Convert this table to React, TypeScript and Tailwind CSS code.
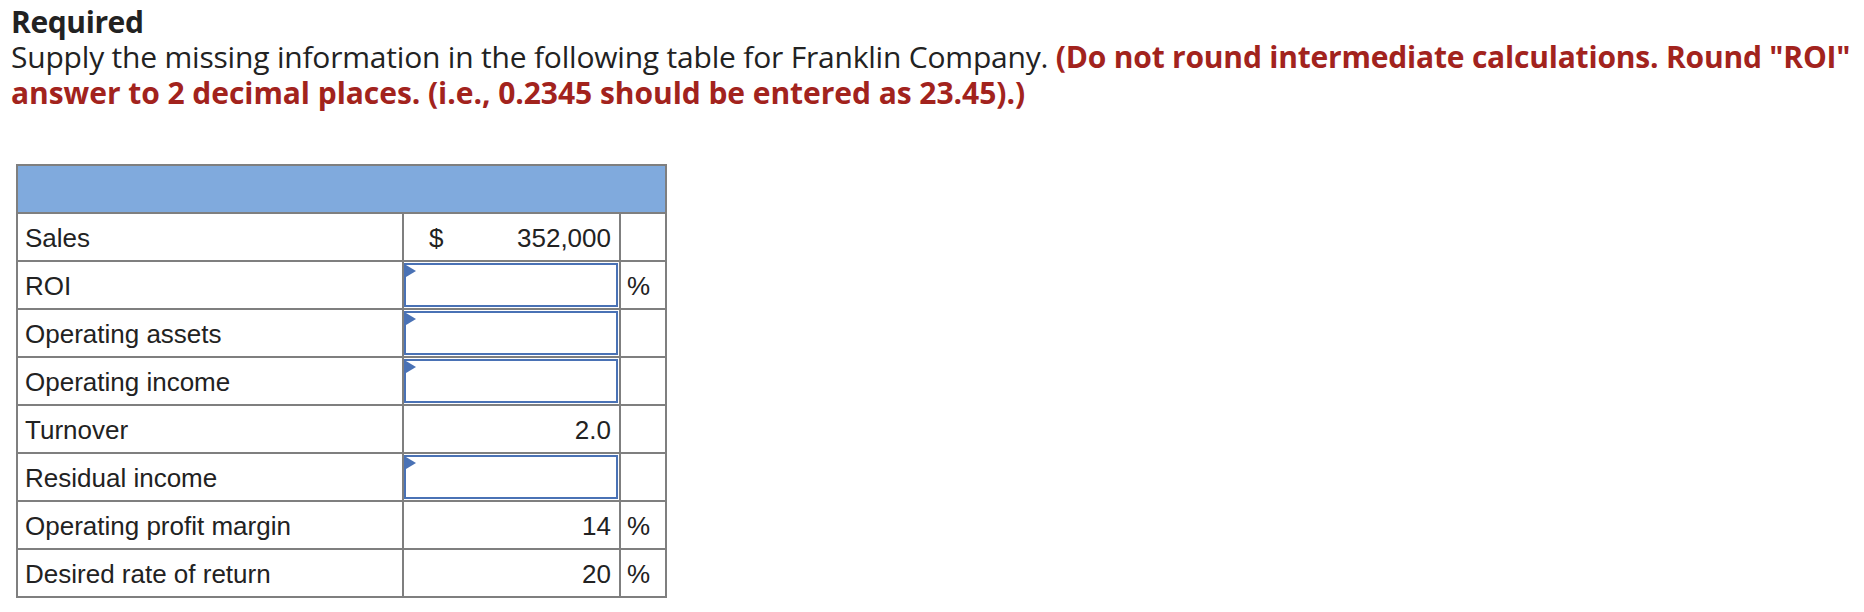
import React from "react";

const rows: { label: string; kind: "sales" | "input" | "value"; value?: string; pct?: boolean }[] = [
  { label: "Sales", kind: "sales", value: "352,000" },
  { label: "ROI", kind: "input", pct: true },
  { label: "Operating assets", kind: "input" },
  { label: "Operating income", kind: "input" },
  { label: "Turnover", kind: "value", value: "2.0" },
  { label: "Residual income", kind: "input" },
  { label: "Operating profit margin", kind: "value", value: "14", pct: true },
  { label: "Desired rate of return", kind: "value", value: "20", pct: true },
];

function InputBox() {
  return (
    <div className="relative h-[44px] border-2 border-[#4a72b5] bg-white">
      <div className="absolute left-0 top-0 h-0 w-0 border-y-[6px] border-l-[10px] border-y-transparent border-l-[#4a72b5]" />
    </div>
  );
}

export default function App() {
  return (
    <div className="min-h-[612px] w-[1864px] bg-white pl-[11px] pt-[5px]">
      <div className="font-['Open_Sans',sans-serif] text-[30px] tracking-[-0.2px] text-[#222222]">
        <div className="font-bold leading-[34px] tracking-[-0.4px]">Required</div>
        <p className="whitespace-nowrap leading-[36px]">
          Supply the missing information in the following table for Franklin Company.{" "}
          <span className="font-bold text-[#a2231d]">
            (Do not round intermediate calculations. Round "ROI"
            <br />
            <span className="tracking-[-0.05px]">answer to 2 decimal places. (i.e., 0.2345 should be entered as 23.45).)</span>
          </span>
        </p>
      </div>
      <table className="ml-[5px] mt-[53px] table-fixed border-collapse font-['Liberation_Sans',Arial,sans-serif] text-[26px] text-[#222222]">
        <colgroup>
          <col className="w-[386px]" />
          <col className="w-[217px]" />
          <col className="w-[46px]" />
        </colgroup>
        <tbody>
          <tr className="h-[48px]">
            <td colSpan={3} className="border-2 border-[#7f7f7f] bg-[#80aadd]" />
          </tr>
          {rows.map((r) => (
            <tr key={r.label} className="h-[48px]">
              <td className="border-2 border-[#7f7f7f] px-[7px] pt-[1px] align-middle leading-none">{r.label}</td>
              <td className="border-2 border-[#7f7f7f] p-0 align-middle">
                {r.kind === "input" ? (
                  <div className="pb-[1px] pl-0 pr-[1px] pt-[1px]">
                    <InputBox />
                  </div>
                ) : r.kind === "sales" ? (
                  <div className="flex items-center justify-between pl-[25px] pr-[8px] pt-[1px] leading-none">
                    <span>$</span>
                    <span>{r.value}</span>
                  </div>
                ) : (
                  <div className="pr-[8px] pt-[1px] text-right leading-none">{r.value}</div>
                )}
              </td>
              <td className="border-2 border-[#7f7f7f] px-[6px] pt-[1px] align-middle leading-none">{r.pct ? "%" : ""}</td>
            </tr>
          ))}
        </tbody>
      </table>
    </div>
  );
}
